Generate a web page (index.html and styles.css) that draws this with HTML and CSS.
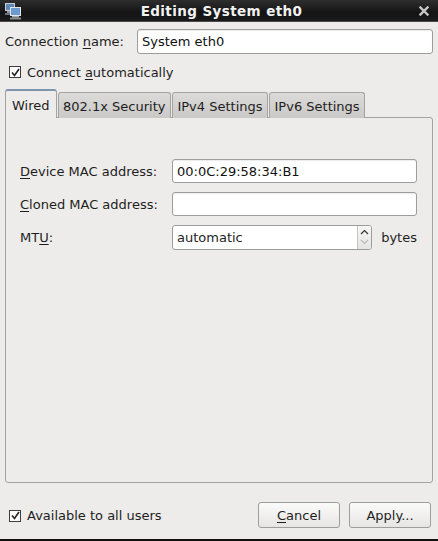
FILE: index.html
```html
<!DOCTYPE html>
<html>
<head>
<meta charset="utf-8">
<link rel="stylesheet" href="styles.css">
</head>
<body>
<div class="window">
  <div class="titlebar">
    <svg class="app-icon" width="18" height="18" viewBox="0 0 18 18">
      <rect x="1.5" y="1.5" width="9" height="7" fill="#5d87b8" stroke="#c9ced6" stroke-width="1"/>
      <rect x="3" y="9" width="6" height="2" fill="#8e939a"/>
      <rect x="1" y="11" width="10" height="2" fill="#6d7278"/>
      <rect x="6.5" y="5.5" width="10" height="8" fill="#6b9ad0" stroke="#e2e6ec" stroke-width="1"/>
      <rect x="8" y="14" width="7" height="1.5" fill="#a8adb4"/>
      <rect x="6" y="15.5" width="11" height="2" fill="#8b9096"/>
    </svg>
    <div class="title">Editing System eth0</div>
    <svg class="close" width="10" height="10" viewBox="0 0 10 10">
      <path d="M1.5 1.5 L8.5 8.5 M8.5 1.5 L1.5 8.5" stroke="#c8c8c8" stroke-width="2.4" stroke-linecap="square"/>
    </svg>
  </div>

  <div class="content">
    <div class="name-row">
      <span class="label">Connection <u>n</u>ame:</span>
      <div class="entry name-entry">System eth0</div>
    </div>

    <div class="check-row auto-row">
      <span class="checkbox"><svg width="9" height="9" viewBox="0 0 9 9"><path d="M1 4.5 L3.5 7.5 L8 1" fill="none" stroke="#222" stroke-width="1.6"/></svg></span>
      <span>Connect <u>a</u>utomatically</span>
    </div>

    <div class="notebook">
      <div class="tabs">
        <div class="tab active">Wired</div>
        <div class="tab">802.1x Security</div>
        <div class="tab">IPv4 Settings</div>
        <div class="tab">IPv6 Settings</div>
      </div>
      <div class="panel">
        <div class="form">
          <span class="flabel"><u>D</u>evice MAC address:</span>
          <div class="entry">00:0C:29:58:34:B1</div>
          <span class="flabel"><u>C</u>loned MAC address:</span>
          <div class="entry"></div>
          <span class="flabel">MT<u>U</u>:</span>
          <div class="spin-row">
            <div class="spin">
              <span class="spin-text">automatic</span>
              <span class="spin-btns">
                <svg width="9" height="6" viewBox="0 0 9 6"><path d="M1 5 L4.5 1.5 L8 5" fill="none" stroke="#333" stroke-width="1.2"/></svg>
                <svg width="9" height="6" viewBox="0 0 9 6"><path d="M1 1 L4.5 4.5 L8 1" fill="none" stroke="#b8b8b8" stroke-width="1.2"/></svg>
              </span>
            </div>
            <span class="unit">bytes</span>
          </div>
        </div>
      </div>
    </div>

    <div class="bottom-row">
      <div class="check-row">
        <span class="checkbox"><svg width="9" height="9" viewBox="0 0 9 9"><path d="M1 4.5 L3.5 7.5 L8 1" fill="none" stroke="#222" stroke-width="1.6"/></svg></span>
        <span>Available to all users</span>
      </div>
      <div class="buttons">
        <div class="button"><u>C</u>ancel</div>
        <div class="button">Apply...</div>
      </div>
    </div>
  </div>
  <div class="bottom-edge"></div>
</div>
</body>
</html>
```

FILE: styles.css
```css
* { box-sizing: border-box; }
html, body {
  margin: 0;
  padding: 0;
  background: #edecea;
}
body {
  width: 438px;
  height: 541px;
  overflow: hidden;
  font-family: "DejaVu Sans", sans-serif;
  font-size: 13px;
  color: #1e1e1e;
}
u { text-decoration: underline; text-underline-offset: 2px; text-decoration-thickness: 1px; }
.window {
  display: flex;
  flex-direction: column;
  height: 541px;
}
.titlebar {
  height: 22px;
  flex: none;
  display: flex;
  align-items: center;
  background: linear-gradient(#2e2e2e, #141414 60%, #1b1b1b);
  border-bottom: 1px solid #4a4a4a;
  padding: 0 8px 0 4px;
}
.app-icon { flex: none; }
.title {
  flex: 1;
  text-align: center;
  color: #f2f2f2;
  font-weight: bold;
  font-size: 13.5px;
  letter-spacing: 0.4px;
  padding-left: 2px;
}
.close { flex: none; margin-right: 1px; }

.content {
  flex: 1;
  display: flex;
  flex-direction: column;
  padding: 0 5px 0 5px;
}
.name-row {
  display: flex;
  align-items: center;
  margin-top: 7px;
  height: 25px;
}
.name-row .label { width: 132px; flex: none; }
.entry {
  background: #fff;
  border: 1px solid #9d9d9b;
  border-radius: 3px;
  box-shadow: inset 0 1px 1px rgba(0,0,0,0.08);
  height: 24px;
  display: flex;
  align-items: center;
  padding-left: 4px;
  color: #111;
}
.name-entry { width: 296px; height: 25px; }

.check-row {
  display: flex;
  align-items: center;
}
.auto-row {
  margin-top: 8px;
  height: 20px;
  padding-left: 4px;
}
.checkbox {
  width: 12px;
  height: 12px;
  border: 1px solid #3c3c3c;
  background: #fcfcfc;
  display: flex;
  align-items: center;
  justify-content: center;
  margin-right: 6px;
  flex: none;
}

.notebook {
  margin-top: 8px;
  display: flex;
  flex-direction: column;
}
.tabs {
  display: flex;
  align-items: flex-end;
  height: 28px;
  position: relative;
  z-index: 1;
  margin-bottom: -1px;
}
.tab {
  height: 26px;
  padding: 1px 4.5px 0 4.5px;
  display: flex;
  align-items: center;
  background: linear-gradient(#dcdbd9, #cac9c7);
  border: 1px solid #a2a2a0;
  border-bottom: none;
  border-radius: 3px 3px 0 0;
  margin-right: 1px;
  color: #1e1e1e;
}
.tab.active {
  height: 29px;
  background: #edecea;
  border-color: #a2a2a0;
  border-top: 2px solid #7d95ad;
  padding: 1px 6px 0 6px;
  margin-right: 1px;
}
.panel {
  height: 366px;
  width: 428px;
  border: 1px solid #a2a2a0;
  border-radius: 0 3px 3px 3px;
  background: #edecea;
  padding: 41px 15px 0 14px;
}
.form {
  display: grid;
  grid-template-columns: 152px 245px;
  grid-auto-rows: 24px;
  row-gap: 9px;
  align-items: center;
}
.flabel { white-space: nowrap; }
.spin-row {
  display: flex;
  align-items: center;
}
.spin {
  width: 204px;
  height: 25px;
  background: #fff;
  border: 1px solid #9d9d9b;
  border-radius: 3px;
  display: flex;
  align-items: stretch;
}
.spin-text {
  flex: 1;
  display: flex;
  align-items: center;
  padding-left: 4px;
}
.spin-btns {
  width: 14px;
  display: flex;
  flex-direction: column;
  justify-content: space-around;
  align-items: center;
  background: linear-gradient(#f7f7f6, #e4e4e2);
  border-left: 1px solid #c3c3c1;
  border-radius: 0 2px 2px 0;
  padding: 2px 0;
}
.unit { margin-left: 9px; }

.bottom-row {
  margin-top: 19px;
  height: 26px;
  display: flex;
  align-items: center;
  justify-content: space-between;
  padding-left: 4px;
}
.bottom-row .check-row { padding-top: 1px; }
.buttons {
  display: flex;
  gap: 9px;
  margin-right: 2px;
}
.button {
  width: 82px;
  height: 26px;
  border: 1px solid #9d9d9b;
  border-radius: 3px;
  background: linear-gradient(#fbfbfb, #e6e5e3);
  display: flex;
  align-items: center;
  justify-content: center;
  color: #1e1e1e;
}
.bottom-edge {
  flex: none;
  height: 2px;
  background: #111;
  margin-top: auto;
}
```
